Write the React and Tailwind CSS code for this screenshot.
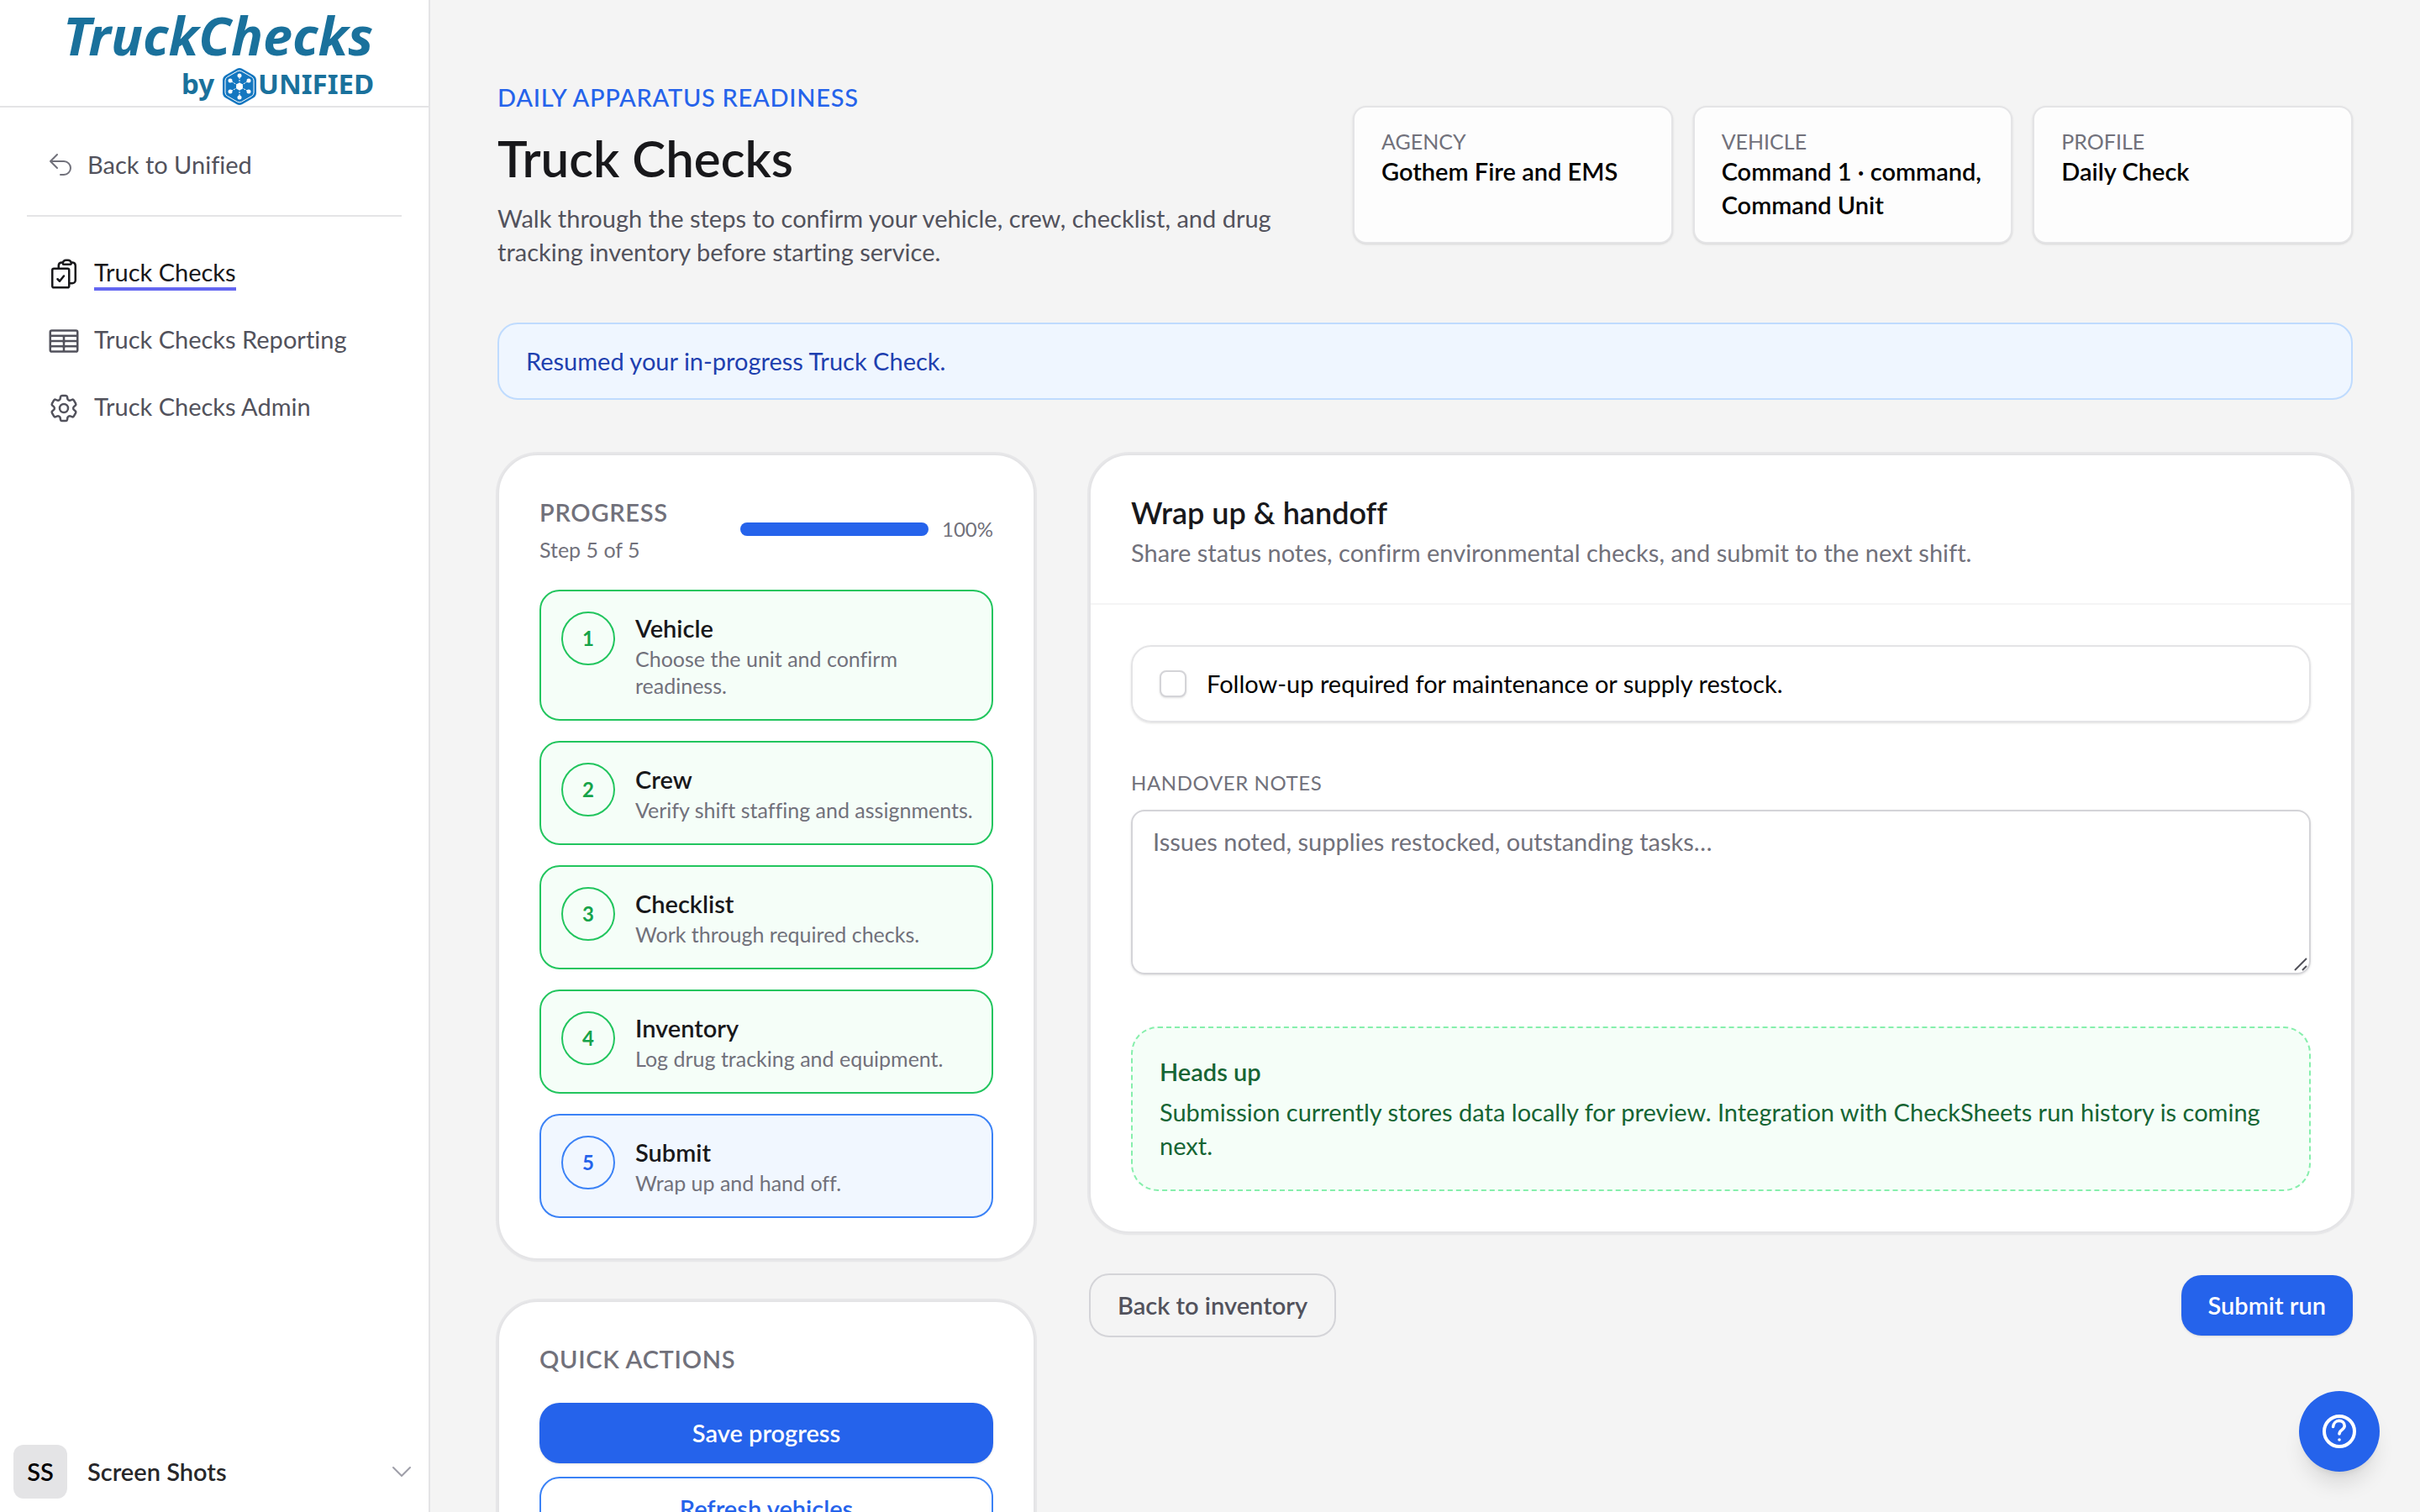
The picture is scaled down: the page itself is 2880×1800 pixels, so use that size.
import { useState } from 'react'
import clsx from 'clsx'
import {
  HiOutlineArrowUturnLeft,
  HiOutlineChevronDown,
  HiOutlineClipboardDocumentCheck,
  HiOutlineCog6Tooth,
  HiOutlineTableCells,
} from 'react-icons/hi2'

const NAV = [
  { label: 'Truck Checks', icon: HiOutlineClipboardDocumentCheck, active: true },
  { label: 'Truck Checks Reporting', icon: HiOutlineTableCells },
  { label: 'Truck Checks Admin', icon: HiOutlineCog6Tooth },
]

const SUMMARY = [
  { label: 'Agency', value: 'Gothem Fire and EMS' },
  { label: 'Vehicle', value: 'Command 1 · command, Command Unit' },
  { label: 'Profile', value: 'Daily Check' },
]

const STEPS = [
  { title: 'Vehicle', text: 'Choose the unit and confirm readiness.' },
  { title: 'Crew', text: 'Verify shift staffing and assignments.' },
  { title: 'Checklist', text: 'Work through required checks.' },
  { title: 'Inventory', text: 'Log drug tracking and equipment.' },
  { title: 'Submit', text: 'Wrap up and hand off.' },
]

function Logo() {
  // outer ring of dots in the hexagon, one spoke each
  const dots = [[20, 9], [31, 15], [31, 28], [20, 35], [9, 28], [9, 15]]
  return (
    <svg width="384" height="128" viewBox="0 0 384 128" role="img" aria-label="TruckChecks by Unified">
      <g fill="#1a719c" fontFamily="'Noto Sans', sans-serif" className="font-bold">
        <text x="12" y="66" className="text-[63px] italic">TruckChecks</text>
        <text x="153" y="112" className="text-[33px]">by</text>
        <text x="244" y="112" className="text-[33px]">UNIFIED</text>
      </g>
      <g transform="translate(202 81)">
        <path d="M16.5 1a7 7 0 0 1 7 0l13 7.4a7 7 0 0 1 3.5 6v15.2a7 7 0 0 1-3.5 6l-13 7.4a7 7 0 0 1-7 0l-13-7.4a7 7 0 0 1-3.5-6v-15.2a7 7 0 0 1 3.5-6z" fill="#1477c0" />
        <path d="M17.5 3.8a5 5 0 0 1 5 0l12 6.8a5 5 0 0 1 2.5 4.3v14.2a5 5 0 0 1-2.5 4.3l-12 6.8a5 5 0 0 1-5 0l-12-6.8a5 5 0 0 1-2.5-4.3v-14.2a5 5 0 0 1 2.5-4.3z" fill="none" stroke="#fff" strokeWidth="1" />
        {dots.map(([x, y]) => (
          <g key={`${x}-${y}`}>
            <line x1="20" y1="22" x2={x} y2={y} stroke="#fff" strokeWidth="1" strokeDasharray="2 1" />
            <circle cx={x} cy={y} r="2.5" fill="#fff" />
          </g>
        ))}
        <circle cx="20" cy="22" r="4" fill="#fff" />
      </g>
    </svg>
  )
}

function Sidebar() {
  return (
    <aside className="w-[512px] shrink-0 h-full flex flex-col bg-white border-r-2 border-[#e4e4e6]">
      <div className="h-32 flex justify-center border-b-2 border-[#e4e4e6]">
        <Logo />
      </div>

      <div className="mx-8 pt-8 pb-6 border-b-2 border-[#e4e4e6]">
        <a href="#" className="h-[72px] px-6 flex items-center gap-4 text-zinc-600">
          <HiOutlineArrowUturnLeft size={32} className="text-zinc-500 shrink-0" />
          Back to Unified
        </a>
      </div>

      <nav className="px-14 pt-7">
        {NAV.map(({ label, icon: Icon, active }) => (
          <a
            key={label}
            href="#"
            className={clsx('h-20 flex items-center gap-4', active ? 'text-zinc-900' : 'text-zinc-600')}
          >
            <Icon size={40} className="shrink-0" />
            <span className={clsx('leading-9 border-b-4', active ? 'border-[#6366f1]' : 'border-transparent')}>
              {label}
            </span>
          </a>
        ))}
      </nav>

      <button type="button" className="mt-auto p-4 flex items-center gap-6 text-left">
        <span className="size-16 rounded-xl bg-[#e4e4e6] flex items-center justify-center font-semibold text-black">SS</span>
        <span className="flex-1 font-semibold text-zinc-800">Screen Shots</span>
        <HiOutlineChevronDown size={32} className="text-zinc-400" />
      </button>
    </aside>
  )
}

function Card({ className, children }) {
  return (
    <section className={clsx('bg-white border-2 border-[#e4e4e6] rounded-[48px] ring-2 ring-[#e7e7e9] shadow-sm', className)}>
      {children}
    </section>
  )
}

function Step({ number, title, text, current }) {
  return (
    <button
      type="button"
      aria-current={current ? 'step' : undefined}
      className={clsx(
        'w-full flex items-start gap-6 py-6 pl-6 pr-4 border-2 rounded-3xl text-left',
        current ? 'border-[#3b82f6] bg-[#f1f7ff]' : 'border-[#22c55e] bg-[#f5fef8]',
      )}
    >
      <span
        className={clsx(
          'size-16 shrink-0 rounded-full border-2 flex items-center justify-center text-2xl font-bold',
          current ? 'border-[#3b82f6] text-[#2563eb]' : 'border-[#22c55e] text-[#16a34a]',
        )}
      >
        {number}
      </span>
      <span>
        <span className="block font-semibold text-zinc-900">{title}</span>
        <span className="block text-[25px] leading-8 text-zinc-500">{text}</span>
      </span>
    </button>
  )
}

function Progress() {
  return (
    <Card className="p-12">
      <div className="flex items-center justify-between">
        <div>
          <h2 className="font-semibold tracking-wide uppercase text-zinc-500">Progress</h2>
          <p className="mt-2 text-[25px] leading-8 text-zinc-500">Step 5 of 5</p>
        </div>
        <div className="flex items-center gap-4">
          <div className="w-56 h-4 rounded-full bg-zinc-200 overflow-hidden">
            <div className="h-full w-full bg-[#2563eb]" />
          </div>
          <span className="text-2xl text-zinc-500">100%</span>
        </div>
      </div>

      <div className="mt-8 flex flex-col gap-6">
        {STEPS.map((step, i) => (
          <Step key={step.title} number={i + 1} current={i === STEPS.length - 1} {...step} />
        ))}
      </div>
    </Card>
  )
}

function QuickActions() {
  return (
    <Card className="p-12">
      <h2 className="font-semibold tracking-wide uppercase text-zinc-500">Quick actions</h2>
      <div className="mt-8 flex flex-col gap-4">
        <button type="button" className="py-4 rounded-3xl bg-[#2563eb] font-semibold text-white shadow-sm">Save progress</button>
        <button type="button" className="py-4 rounded-3xl border-2 border-[#3b82f6] font-semibold text-[#2563eb]">Refresh vehicles</button>
      </div>
    </Card>
  )
}

function Handoff() {
  const [followUp, setFollowUp] = useState(false)
  const [notes, setNotes] = useState('')

  return (
    <Card>
      <div className="px-12 py-10 border-b-2 border-zinc-100">
        <h2 className="text-[36px] leading-[56px] font-semibold text-zinc-900">Wrap up &amp; handoff</h2>
        <p className="text-zinc-500">Share status notes, confirm environmental checks, and submit to the next shift.</p>
      </div>

      <div className="p-12">
        <label className="flex items-center gap-6 px-8 py-6 border-2 border-[#e4e4e6] rounded-3xl shadow-sm text-black">
          <input
            type="checkbox"
            checked={followUp}
            onChange={(e) => setFollowUp(e.target.checked)}
            className="size-8 appearance-none rounded-lg border-2 border-zinc-300 bg-white shadow-sm checked:bg-[#2563eb]"
          />
          Follow-up required for maintenance or supply restock.
        </label>

        <label htmlFor="notes" className="mt-14 block text-2xl tracking-wide uppercase text-zinc-500">
          Handover notes
        </label>
        <div className="relative mt-4">
          <textarea
            id="notes"
            rows={4}
            value={notes}
            onChange={(e) => setNotes(e.target.value)}
            placeholder="Issues noted, supplies restocked, outstanding tasks…"
            className="block w-full resize-none px-6 py-4 border-2 border-zinc-300 rounded-2xl shadow-sm placeholder:text-zinc-500"
          />
          <svg className="absolute right-1 bottom-1" width="16" height="16" fill="none" stroke="#52525b" strokeWidth="2">
            <path d="M1 15 15 1M10 15l5-5" />
          </svg>
        </div>

        <div className="mt-[62px] p-8 border-2 border-dashed border-[#86efac] rounded-[32px] bg-[#f5fef8] text-[#166534]">
          <p className="font-semibold">Heads up</p>
          <p className="mt-2">
            Submission currently stores data locally for preview. Integration with CheckSheets run history is coming next.
          </p>
        </div>
      </div>
    </Card>
  )
}

export default function App() {
  return (
    <div className="h-screen flex overflow-hidden bg-[#f4f4f4] font-['Lato',sans-serif] text-[29px] leading-10 [font-variant-ligatures:none]">
      <Sidebar />

      <main className="flex-1 min-w-0 px-20 pt-24 pb-20 overflow-y-auto [scrollbar-width:none]">
        <header className="grid grid-cols-[minmax(0,1fr)_1190px] items-center gap-12">
          <div>
            <p className="font-medium tracking-wide uppercase text-[#2563eb]">Daily apparatus readiness</p>
            <h1 className="mt-4 text-[60px] leading-[72px] font-semibold text-zinc-900">Truck Checks</h1>
            <p className="mt-4 text-zinc-600">
              Walk through the steps to confirm your vehicle, crew, checklist, and drug tracking inventory before starting service.
            </p>
          </div>
          <dl className="grid grid-cols-3 gap-6">
            {SUMMARY.map(({ label, value }) => (
              <div key={label} className="px-8 py-6 border-2 border-[#e4e4e6] rounded-2xl bg-[#fdfdfd] shadow-sm">
                <dt className="text-[25px] leading-8 uppercase text-zinc-500">{label}</dt>
                <dd className="font-semibold text-black">{value}</dd>
              </div>
            ))}
          </dl>
        </header>

        <div role="status" className="mt-16 px-8 py-6 border-2 border-[#bfdbfe] rounded-3xl bg-[#eff6ff] text-[#1e40af]">
          Resumed your in-progress Truck Check.
        </div>

        <div className="mt-16 grid grid-cols-[640px_minmax(0,1fr)] items-start gap-16">
          <div className="flex flex-col gap-12">
            <Progress />
            <QuickActions />
          </div>
          <div className="flex flex-col gap-12">
            <Handoff />
            <div className="flex items-center justify-between">
              <button type="button" className="px-8 py-4 border-2 border-zinc-300 rounded-3xl font-semibold text-zinc-600">Back to inventory</button>
              <button type="button" className="px-8 py-4 rounded-3xl bg-[#2563eb] font-semibold text-white shadow-sm">Submit run</button>
            </div>
          </div>
        </div>
      </main>

      <button
        type="button"
        aria-label="Help"
        className="fixed right-12 bottom-12 size-24 rounded-full bg-[#2563eb] text-white shadow-xl flex items-center justify-center"
      >
        <svg width="48" height="48" viewBox="0 0 24 24" fill="none" stroke="currentColor" strokeWidth="2" strokeLinecap="round" strokeLinejoin="round">
          <circle cx="12" cy="12" r="9" />
          <path d="M8.3 9.2c.2-2 1.7-3.5 3.5-3.5 1.9 0 3.3 1.3 3.3 3.1 0 2.2-3.1 2.3-3.1 4.7M12 17h.01" strokeWidth="1.8" />
        </svg>
      </button>
    </div>
  )
}
